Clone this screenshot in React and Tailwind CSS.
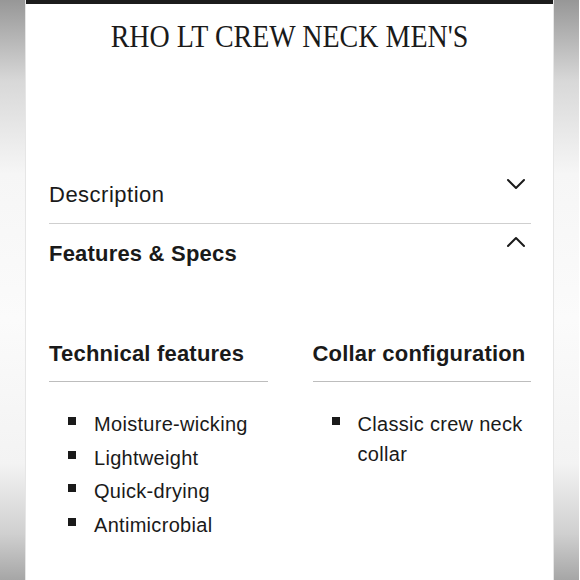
import React from "react";

function ChevronDown() {
  return (
    <svg width="20" height="12" viewBox="0 0 20 12" fill="none" stroke="#1a1a1a" strokeWidth="2" strokeLinecap="round" strokeLinejoin="round">
      <polyline points="2,2 10,10 18,2" />
    </svg>
  );
}

function ChevronUp() {
  return (
    <svg width="20" height="12" viewBox="0 0 20 12" fill="none" stroke="#1a1a1a" strokeWidth="2" strokeLinecap="round" strokeLinejoin="round">
      <polyline points="2,10 10,2 18,10" />
    </svg>
  );
}

function Bullet({ children }) {
  return (
    <li className="flex items-start">
      <span className="mt-[8px] ml-[19px] w-[8px] h-[8px] bg-[#1a1a1a] shrink-0" />
      <span className="ml-[18px] text-[20px] leading-[30px] tracking-[0.3px] text-[#1a1a1a]">{children}</span>
    </li>
  );
}

function Column({ title, items }) {
  return (
    <div className="flex flex-col">
      <div className="pb-[13px] border-b border-[#bdbdbd] text-[22px] leading-[28px] tracking-[0.2px] font-bold text-[#1a1a1a]">
        {title}
      </div>
      <ul className="mt-[27px] flex flex-col gap-[3.6px]">
        {items.map((t) => (
          <Bullet key={t}>{t}</Bullet>
        ))}
      </ul>
    </div>
  );
}

export default function App() {
  const strip =
    "w-[26px] shrink-0 bg-[linear-gradient(to_bottom,#979797_0%,#d8d8d8_14%,#f6f6f6_30%,#fbfbfb_55%,#f3f3f3_80%,#d0d0d0_92%,#a6a6a6_100%)]";
  return (
    <div className="flex w-[580px] h-[580px] overflow-hidden bg-white" style={{ fontFamily: '"Liberation Sans", Arial, sans-serif' }}>
      <div className={strip + " border-r border-[#e6e6e6]"} />
      <div className="w-[527px] shrink-0 bg-white flex flex-col">
        <div className="h-[4px] bg-[#1c1c1c]" />
        <h1
          className="mt-[15px] text-center text-[28px] leading-[36px] tracking-[0px] text-[#1a1a1a] font-normal scale-y-[1.12]"
          style={{ fontFamily: '"Liberation Serif", "Times New Roman", serif' }}
        >
          RHO LT CREW NECK MEN&apos;S
        </h1>
        <div className="pl-[23px] pr-[22px] flex flex-col">
          <div className="mt-[123px] flex justify-between items-start border-b border-[#cfcfcf] pb-[14px]">
            <span className="mt-[3px] text-[22px] leading-[28px] tracking-[0.5px] text-[#1a1a1a]">Description</span>
            <span className="mr-[5px]"><ChevronDown /></span>
          </div>
          <div className="flex justify-between items-start pt-[12px]">
            <span className="mt-[4px] text-[22px] leading-[28px] tracking-[0.2px] font-bold text-[#1a1a1a]">Features &amp; Specs</span>
            <span className="mr-[5px]"><ChevronUp /></span>
          </div>
          <div className="mt-[72px] grid grid-cols-2 gap-[45px]">
            <Column title="Technical features" items={["Moisture-wicking", "Lightweight", "Quick-drying", "Antimicrobial"]} />
            <Column title="Collar configuration" items={["Classic crew neck collar"]} />
          </div>
        </div>
      </div>
      <div className={strip + " border-l border-[#e6e6e6]"} />
    </div>
  );
}
